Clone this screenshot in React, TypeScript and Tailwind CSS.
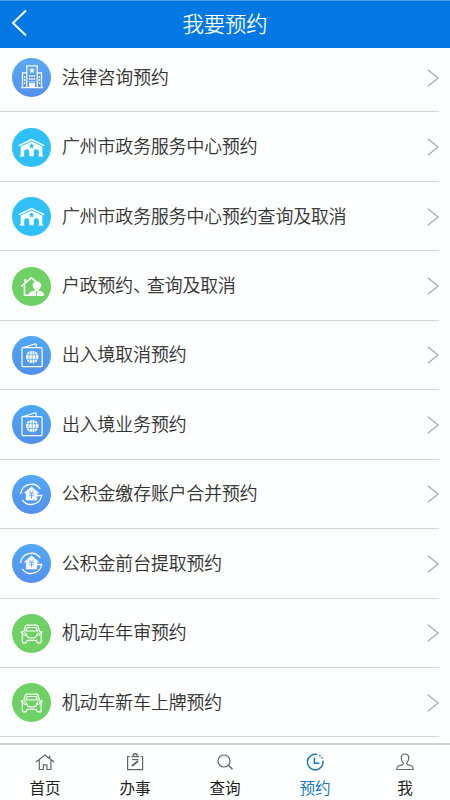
import React from "react";
import clsx from "clsx";

type IconName = "building" | "hall" | "household" | "passport" | "fund" | "car";

const services: { icon: IconName; label: string }[] = [
  { icon: "building", label: "法律咨询预约" },
  { icon: "hall", label: "广州市政务服务中心预约" },
  { icon: "hall", label: "广州市政务服务中心预约查询及取消" },
  { icon: "household", label: "户政预约、查询及取消" },
  { icon: "passport", label: "出入境取消预约" },
  { icon: "passport", label: "出入境业务预约" },
  { icon: "fund", label: "公积金缴存账户合并预约" },
  { icon: "fund", label: "公积金前台提取预约" },
  { icon: "car", label: "机动车年审预约" },
  { icon: "car", label: "机动车新车上牌预约" },
];

const iconBackground: Record<IconName, string> = {
  building: "bg-linear-to-b from-[#5aa9f3] to-[#5490ea]",
  hall: "bg-[#2fc0f8]",
  household: "bg-[#6fd165]",
  passport: "bg-linear-to-b from-[#4fa8f6] to-[#5090ea]",
  fund: "bg-linear-to-b from-[#52a8f6] to-[#5490ee]",
  car: "bg-[#6fd165]",
};

// all drawn on a 39x39 grid, the size of the round badge
const iconShapes: Record<IconName, React.ReactNode> = {
  building: (
    <>
      <path d="M14.8 29.5V7.8h10.4V29.5M14.8 14.8h-4.3v14.7M25.2 14.8h4.3v14.7M8.8 29.6h22.4" />
      <path d="M17.6 29.5v-3.7h4.8v3.7z" fill="#fff" />
      <path
        d="M20 9.300l.9 2.100 2.300.2-1.800 1.500.6 2.200-2-1.200-2 1.200.6-2.200-1.800-1.500 2.300-.2z"
        fill="#fff"
        stroke="none"
      />
      <path
        d="M17.7 17v7.5M20 17v7.5M22.3 17v7.5M12.6 18v8.5M27.4 18v8.5"
        strokeWidth="1.3"
        strokeDasharray="1.9 1.2"
      />
    </>
  ),
  hall: (
    <>
      <path d="M6.8 17.6l12.7-6.1 12.7 6.1" strokeWidth="1.4" />
      <path
        fillRule="evenodd"
        fill="#fff"
        stroke="none"
        d="M8.7 18.4l10.8-5 10.8 5v9.800h-3.400v-4.200q0-2.800-2.600-2.800t-2.600 2.800v4.200h-4.400v-4.200q0-2.800-2.600-2.800t-2.600 2.800v4.200H8.700zM19.500 14.900l-.8 1.900-2.100.2 1.600 1.400-.5 2.100 1.800-1.100 1.800 1.100-.5-2.100 1.600-1.400-2.100-.2z"
      />
      <path d="M7.800 27.900h4.500M26.700 27.900h4.500" />
    </>
  ),
  household: (
    <>
      <path d="M9.3 19.4L19.2 10.800l10 8.1M12.5 17.6v10.6h6M13.2 15.5v-3.7" strokeWidth="1.6" />
      <g fill="#fff" stroke="none">
        <circle cx="24.8" cy="18.6" r="4.1" />
        <path d="M23 21.5h3.6v3.3H23z" />
        <path d="M16.8 29v-2.1q0-1.9 2.4-2.5l3.7-.8 1.900 2.400 1.900-2.400 3 .8q2 .6 2 2.500V29z" />
      </g>
      <path d="M24.7 24v4.8" stroke="#6fd165" strokeWidth="1" />
    </>
  ),
  passport: (
    <>
      <path d="M10.4 11.7h18.5q1.2 0 1.2 1.2v16.5q0 1.3-1.2 1.3H11.2q-1.2 0-1.2-1.3V11.900L22.7 8q1.5-.4 1.5 1.1v2.5" />
      <circle cx="20.2" cy="21" r="6.3" fill="#fff" stroke="none" />
      <path
        d="M13.5 18.7h13.4M13.5 23.3h13.4M20.2 14.4v13.2M18.2 14.8q-3 6.2 0 12.4M22.2 14.8q3 6.2 0 12.4"
        stroke="#509ef2"
        strokeWidth=".7"
      />
    </>
  ),
  fund: (
    <>
      <path d="M8.6 19A10.9 10.9 0 0 1 28.2 13.8M10.2 24.8A10.8 10.8 0 0 0 29.7 20.5H24.8" strokeWidth="1.3" />
      <path
        d="M19.5 11.900l7 6h-1.800v7H14.300v-7h-1.800z"
        fill="#fff"
        strokeLinejoin="round"
        strokeWidth=".8"
      />
      <path
        d="M17.300 15.500l2.200 2.900 2.200-2.900M17.100 18.700h4.800M17.100 20.800h4.800M19.500 18.400v5"
        stroke="#539af0"
        strokeWidth=".8"
      />
    </>
  ),
  car: (
    <>
      <path d="M11.8 17.8l1.400-5.300q.4-1.400 2-1.400h9q1.600 0 2 1.400l1.400 5.300" />
      <path d="M14 17l1.200-3.500h9l1.200 3.500zM10.700 18.400q-.5 2.400-.3 9.700.1.800.9.800h2.200q.7 0 1-.8l.7-1.800h9.100l.7 1.800q.3.800 1 .8h2.200q.8 0 .9-.8.2-7.300-.3-9.700" />
      <path d="M11.200 17.800H9.300q0 1.800 1.500 1.800M28.200 17.800h1.900q0 1.800-1.500 1.800M14.600 20q.4 3.800 3 3.800h4.300q2.600 0 3-3.800" />
      <circle cx="13" cy="20.200" r="1.300" strokeWidth=".9" />
      <circle cx="26.400" cy="20.200" r="1.300" strokeWidth=".9" />
    </>
  ),
};

const tabs = [
  {
    label: "首页",
    shape: <path d="M.9 10L10 3l9.100 7M14.700 6.300V3.500M4.300 8v9.500h4.100v-4.700h3.500v4.700h4V8" />,
  },
  {
    label: "办事",
    shape: (
      <>
        <path d="M5 4.500H2.600v13.200h15V4.500h-2" />
        <path d="M6.500 4.500h7.500M8.200 3.500q0-1.700 2-1.700t2 1.700" strokeWidth="1.400" />
        <path d="M7 7.600h6.500" />
        <path d="M13 9l-6 5" strokeWidth="2" />
      </>
    ),
  },
  {
    label: "查询",
    shape: (
      <>
        <circle cx="9" cy="9" r="6" />
        <path d="M13.300 13.300l4.200 4" strokeWidth="1.500" />
      </>
    ),
  },
  {
    label: "预约",
    active: true,
    shape: (
      <path
        d="M12.400 2.600A7.800 7.800 0 1 0 17.900 8.700M9.400 5.800v5.500h5M14.300 3.300l1.300.9M16.700 5.400l.7 1.200"
        strokeWidth="1.500"
      />
    ),
  },
  {
    label: "我",
    shape: (
      <path d="M10 2C7.500 2 6.200 3.800 6.200 6c0 2.300 1 3.600 1.800 4.700.5.800.2 1.600-.6 1.900L3.200 14Q1.800 14.600 1.800 17.500h16.400q0-2.900-1.400-3.500l-4.200-1.400c-.8-.3-1.100-1.100-.6-1.900.8-1.100 1.800-2.400 1.800-4.700C13.800 3.800 12.500 2 10 2z" />
    ),
  },
];

const ServiceRow = ({ icon, label }: { icon: IconName; label: string }) => {
  return (
    <div className="flex h-[69.45px] w-[439px] items-center bg-[repeating-linear-gradient(90deg,#c6c6c6_0_1px,#e8e8e8_1px_2px)] bg-[length:100%_1px] bg-bottom bg-no-repeat pl-[11.5px]">
      <div className={clsx("size-[39px] shrink-0 rounded-full", iconBackground[icon])}>
        <svg viewBox="0 0 39 39" className="size-full" fill="none" stroke="#fff" strokeWidth="1.2">
          {iconShapes[icon]}
        </svg>
      </div>
      <p className="-mt-1 ml-[11.5px] grow text-[17.8px] leading-6 font-light whitespace-nowrap text-[#1c1c1c] [-webkit-text-stroke:0.25px_#1c1c1c]">
        {label.split("、").map((part, i) => (
          <React.Fragment key={part}>
            {i > 0 && <span className="tracking-[-4px]">、</span>}
            {part}
          </React.Fragment>
        ))}
      </p>
      <svg width="12" height="18" viewBox="0 0 12 18" fill="none" stroke="#a3a3a3" strokeWidth="1.1">
        <path d="M.8.8L11.2 9 .8 17.2" />
      </svg>
    </div>
  );
};

const App = () => {
  return (
    <div className="flex h-[800px] w-[450px] flex-col overflow-hidden bg-[#fdfefe] font-['Noto_Sans_CJK_SC',sans-serif]">
      <header className="grid h-12 shrink-0 grid-cols-[1fr_auto_1fr] items-center border-t border-[#4b9fea] bg-[#0478e2] pl-[11px]">
        <svg width="17" height="28" viewBox="0 0 17 28" className="-mt-[3px]" fill="none" stroke="#fff" strokeWidth="2">
          <path d="M15 1.5L2 14l13 12.5" />
        </svg>
        <h1 className="-mt-1 -ml-[11px] text-[21.3px] leading-7 font-light text-white [-webkit-text-stroke:0.25px_#fff]">
          我要预约
        </h1>
      </header>
      <main className="-mt-[5px] min-h-0 grow overflow-hidden">
        {services.map((service) => (
          <ServiceRow key={service.label} {...service} />
        ))}
      </main>
      <nav className="grid h-[57px] shrink-0 grid-cols-5 border-t-2 border-[#cfcfcf]">
        {tabs.map(({ label, active, shape }) => (
          <div
            key={label}
            className={clsx("flex flex-col items-center pt-[7px]", active ? "text-[#1a7abf]" : "text-[#1f1f1f]")}
          >
            <svg
              viewBox="0 0 20 20"
              className={clsx("size-5", !active && "text-[#666]")}
              fill="none"
              stroke="currentColor"
              strokeWidth="1.2"
            >
              {shape}
            </svg>
            <span className="mt-[5px] text-[15.6px] leading-5">{label}</span>
          </div>
        ))}
      </nav>
    </div>
  );
};

export default App;
